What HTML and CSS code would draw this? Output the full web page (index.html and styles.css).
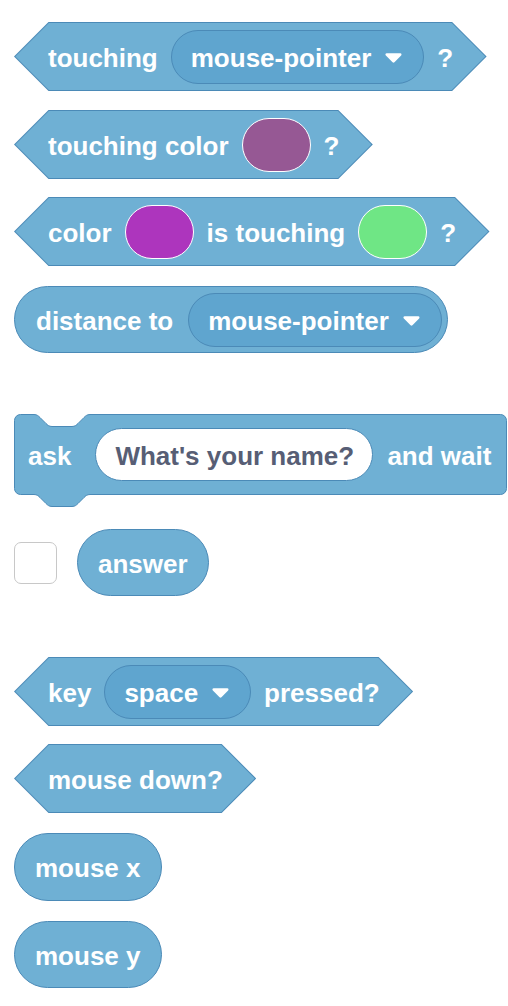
FILE: index.html
```html
<!DOCTYPE html>
<html>
<head>
<meta charset="utf-8">
<link rel="stylesheet" href="styles.css">
</head>
<body>
<div class="palette">

  <div class="bool">
    <div class="bool-body">
      <span class="label">touching</span>
      <span class="dropdown"><span class="dd-text">mouse-pointer</span><svg class="arrow" width="17" height="10" viewBox="0 0 17 10"><path d="M1.8 1.5 H15.2 L8.5 8.4 Z"/></svg></span>
      <span class="label">?</span>
    </div>
  </div>

  <div class="bool mt19">
    <div class="bool-body">
      <span class="label">touching color</span>
      <span class="swatch swatch-mauve"></span>
      <span class="label">?</span>
    </div>
  </div>

  <div class="bool mt18">
    <div class="bool-body">
      <span class="label">color</span>
      <span class="swatch swatch-purple"></span>
      <span class="label">is touching</span>
      <span class="swatch swatch-green"></span>
      <span class="label">?</span>
    </div>
  </div>

  <div class="reporter reporter-input mt20">
    <span class="label">distance to</span>
    <span class="dropdown"><span class="dd-text">mouse-pointer</span><svg class="arrow" width="17" height="10" viewBox="0 0 17 10"><path d="M1.8 1.5 H15.2 L8.5 8.4 Z"/></svg></span>
  </div>

  <div class="stack mt61">
    <svg class="stack-shape" width="494" height="94" viewBox="0 0 494 94">
      <path d="M0.5 6.5 A6 6 0 0 1 6.5 0.5 H20 c3 0 4.5 1.5 6 3 l6 6 c1.5 1.5 3 3 6 3 h20 c3 0 4.5 -1.5 6 -3 l6 -6 c1.5 -1.5 3 -3 6 -3 H486.5 A6 6 0 0 1 492.5 6.5 V74.5 A6 6 0 0 1 486.5 80.5 H76 c-3 0 -4.5 1.5 -6 3 l-6 6 c-1.5 1.5 -3 3 -6 3 h-20 c-3 0 -4.5 -1.5 -6 -3 l-6 -6 c-1.5 -1.5 -3 -3 -6 -3 H6.5 A6 6 0 0 1 0.5 74.5 Z"/>
    </svg>
    <div class="stack-body">
      <span class="label ask">ask</span>
      <span class="text-input">What's your name?</span>
      <span class="label">and wait</span>
    </div>
  </div>

  <div class="check-row mt21">
    <span class="checkbox"></span>
    <div class="reporter">
      <span class="label">answer</span>
    </div>
  </div>

  <div class="bool mt61">
    <div class="bool-body">
      <span class="label">key</span>
      <span class="dropdown"><span class="dd-text">space</span><svg class="arrow" width="17" height="10" viewBox="0 0 17 10"><path d="M1.8 1.5 H15.2 L8.5 8.4 Z"/></svg></span>
      <span class="label">pressed?</span>
    </div>
  </div>

  <div class="bool mt18">
    <div class="bool-body">
      <span class="label">mouse down?</span>
    </div>
  </div>

  <div class="reporter tall mt20">
    <span class="label">mouse x</span>
  </div>

  <div class="reporter mt20">
    <span class="label">mouse y</span>
  </div>

</div>
</body>
</html>
```

FILE: styles.css
```css
html, body {
  margin: 0;
  padding: 0;
  background: #ffffff;
}

.palette {
  display: flex;
  flex-direction: column;
  align-items: flex-start;
  padding: 22px 0 0 14px;
  font-family: "Liberation Sans", Arial, sans-serif;
  font-weight: bold;
  font-size: 26px;
  color: #ffffff;
}

.mt18 { margin-top: 18px; }
.mt19 { margin-top: 19px; }
.mt20 { margin-top: 20px; }
.mt21 { margin-top: 21px; }
.mt61 { margin-top: 61px; }

.label {
  white-space: nowrap;
  line-height: 1;
  padding-top: 2px;
}

/* boolean (hexagon) blocks */
.bool {
  display: inline-flex;
  height: 69px;
  background: #4b8ab7;
  clip-path: polygon(34.5px 0, calc(100% - 34.5px) 0, 100% 50%, calc(100% - 34.5px) 100%, 34.5px 100%, 0 50%);
}

.bool-body {
  display: flex;
  align-items: center;
  gap: 13px;
  margin: 1px 1.4px;
  padding: 0 32px 0 32.6px;
  height: 67px;
  background: #6fb0d4;
  clip-path: polygon(33.5px 0, calc(100% - 33.5px) 0, 100% 50%, calc(100% - 33.5px) 100%, 33.5px 100%, 0 50%);
}

/* dropdown menus */
.dropdown {
  display: inline-flex;
  align-items: center;
  box-sizing: border-box;
  height: 54px;
  padding: 0 21px 0 19px;
  gap: 14px;
  border-radius: 27px;
  background: #5fa5cf;
  border: 1px solid #4b8ab7;
}

.dd-text {
  white-space: nowrap;
  line-height: 1;
  padding-top: 2px;
}

.arrow {
  display: block;
  fill: #ffffff;
  stroke: #ffffff;
  stroke-width: 2.6;
  stroke-linejoin: round;
  margin-top: 2px;
}

/* colour swatches */
.swatch {
  display: block;
  box-sizing: border-box;
  width: 69px;
  height: 54px;
  border-radius: 27px;
  border: 1.5px solid #ffffff;
}

.swatch-mauve { background: #965894; }
.swatch-purple { background: #ad35bd; }
.swatch-green { background: #6fe685; }

/* reporter (round) blocks */
.reporter {
  display: inline-flex;
  align-items: center;
  gap: 15px;
  box-sizing: border-box;
  height: 67px;
  padding: 0 20px;
  border-radius: 34px;
  background: #6fb0d4;
  border: 1px solid #4b8ab7;
}

.reporter.tall {
  height: 68px;
}

.reporter-input {
  padding-left: 21px;
  padding-right: 5px;
}

/* stack block (ask) */
.stack {
  display: grid;
  width: 494px;
  height: 94px;
}

.stack > * {
  grid-area: 1 / 1;
}

.stack-shape {
  display: block;
}

.stack-shape path {
  fill: #6fb0d4;
  stroke: #4b8ab7;
  stroke-width: 1;
}

.stack-body {
  display: flex;
  align-items: center;
  height: 81px;
  padding: 0 15px 0 14px;
  gap: 14px;
}

.ask {
  margin-right: 10px;
}

.text-input {
  display: inline-flex;
  align-items: center;
  box-sizing: border-box;
  height: 53px;
  width: 278px;
  padding: 2px 19px 0 19px;
  border-radius: 27px;
  background: #ffffff;
  border: 1px solid #4b8ab7;
  color: #575e75;
  white-space: nowrap;
  line-height: 1;
}

/* checkbox + answer */
.check-row {
  display: flex;
  align-items: center;
  gap: 20px;
}

.checkbox {
  display: block;
  box-sizing: border-box;
  width: 43px;
  height: 42px;
  border: 1.5px solid #c8c8c8;
  border-radius: 7px;
  background: #ffffff;
}
```
